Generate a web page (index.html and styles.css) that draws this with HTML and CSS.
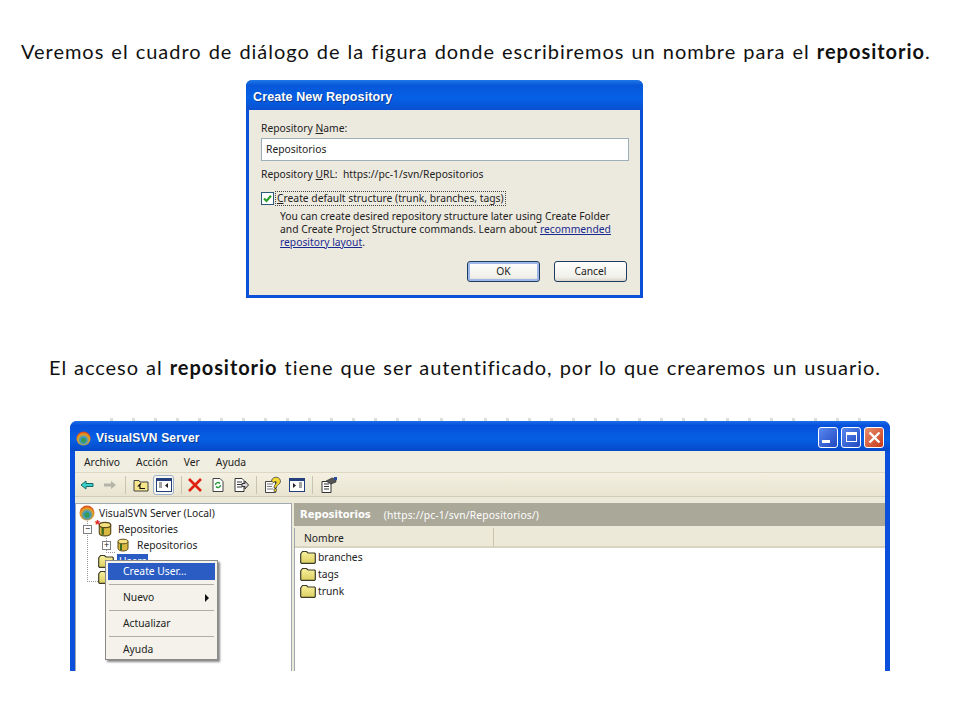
FILE: index.html
```html
<!DOCTYPE html>
<html lang="es">
<head>
<meta charset="utf-8">
<title>Repositorio</title>
<link rel="stylesheet" href="styles.css">
</head>
<body>
<svg class="defs" width="0" height="0">
  <defs>
    <linearGradient id="fold" x1="0" y1="0" x2="0" y2="1"><stop offset="0" stop-color="#f8f0a0"/><stop offset="1" stop-color="#dcd060"/></linearGradient>
    <radialGradient id="logo" cx=".5" cy=".62" r=".6"><stop offset="0" stop-color="#2f9a3c"/><stop offset=".35" stop-color="#2f9ad0"/><stop offset=".7" stop-color="#e8a020"/><stop offset="1" stop-color="#d8401e"/></radialGradient>
    <symbol id="folder" viewBox="0 0 16 14"><path d="M1 3.500 2.500 1.500h4L8 3h6.500l.8.8V12.500l-.8.8H1.500l-.8-.8V4z" fill="url(#fold)" stroke="#3c3c28" stroke-width="1.200"/></symbol>
    <symbol id="db" viewBox="0 0 14 14"><path d="M2 3.500v7c0 1.500 2.200 2.500 5 2.500s5-1 5-2.500v-7z" fill="#d8b840" stroke="#5a4a18"/><ellipse cx="7" cy="3.500" rx="5" ry="2.300" fill="#f4e080" stroke="#5a4a18"/><path d="M5 6v6" stroke="#3c6a20" stroke-width="2"/></symbol>
    <symbol id="applogo" viewBox="0 0 16 16"><circle cx="8" cy="8" r="7.500" fill="url(#logo)"/><circle cx="8" cy="10" r="2.500" fill="#3a9a50"/></symbol>
  </defs>
</svg>
<main class="slide">
  <p class="line line-one">Veremos el cuadro de diálogo de la figura donde escribiremos un nombre para el <b>repositorio</b>.</p>

  <section class="dialog">
    <header class="dialog-title">Create New Repository</header>
    <div class="dialog-body">
      <div class="field-label">Repository <u>N</u>ame:</div>
      <div class="text-input">Repositorios</div>
      <div class="url-row">Repository <u>U</u>RL:&nbsp; https://pc-1/svn/Repositorios</div>
      <div class="check-row">
        <span class="checkbox"><svg width="11" height="11" viewBox="0 0 11 11"><path d="M2 5.500 4.500 8 9 2.800" fill="none" stroke="#2aa02a" stroke-width="2.200"/></svg></span>
        <span class="check-label"><u>C</u>reate default structure (trunk, branches, tags)</span>
      </div>
      <p class="help">You can create desired repository structure later using Create Folder<br>and Create Project Structure commands. Learn about <a class="link">recommended<br>repository layout</a>.</p>
      <div class="buttons">
        <span class="btn btn-default">OK</span>
        <span class="btn">Cancel</span>
      </div>
    </div>
  </section>

  <p class="line line-two">El acceso al <b>repositorio</b> tiene que ser autentificado, por lo que crearemos un usuario.</p>

  <div class="behind"></div>
  <section class="window">
    <header class="win-title">
      <svg class="win-logo" width="15" height="15"><use href="#applogo"/></svg>
      <span class="win-name">VisualSVN Server</span>
      <span class="caps">
        <span class="cap"><i class="cap-min"></i></span>
        <span class="cap"><i class="cap-max"></i></span>
        <span class="cap cap-close"><svg width="13" height="13" viewBox="0 0 13 13"><path d="M1.500 1.500 11.500 11.500M11.500 1.500 1.500 11.500" stroke="#fff" stroke-width="2.400"/></svg></span>
      </span>
    </header>
    <div class="win-inner">
      <nav class="menubar"><span>Archivo</span><span>Acción</span><span>Ver</span><span>Ayuda</span></nav>
      <div class="toolbar">
        <svg class="tool" width="16" height="16" viewBox="0 0 16 16"><path d="M7 4 2 8l5 4v-2.500h7v-3H7z" fill="#38d0c8" stroke="#176a6a"/></svg>
        <svg class="tool" width="16" height="16" viewBox="0 0 16 16"><path d="M9 4l5 4-5 4V9.500H2v-3h7z" fill="#b4b4a8"/></svg>
        <i class="sep"></i>
        <svg class="tool" width="16" height="16" viewBox="0 0 16 16"><path d="M1 3.500h5l1 1.500h8v9H1z" fill="#f6e58a" stroke="#444"/><path d="M8 6.500 5.500 9H7v2.500h5" fill="none" stroke="#111" stroke-width="1.200"/></svg>
        <span class="tool-on"><svg width="16" height="14" viewBox="0 0 16 14"><rect x=".5" y=".5" width="15" height="13" fill="#fff" stroke="#23407c"/><rect x="1" y="1" width="14" height="2" fill="#23407c"/><path d="M3 5h3M3 7h3M3 9h3" stroke="#444"/><path d="M12 5v5L9 7.500z" fill="#222"/></svg></span>
        <i class="sep"></i>
        <svg class="tool tool-x" width="16" height="16" viewBox="0 0 16 16"><path d="M2 2 14 14M14 2 2 14" stroke="#e02010" stroke-width="2.600"/></svg>
        <svg class="tool" width="16" height="16" viewBox="0 0 16 16"><path d="M3 1.500h7l3 3v10H3z" fill="#fff" stroke="#444"/><path d="M5.500 8a2.500 2.500 0 0 1 4.500-1.500M10.500 8a2.500 2.500 0 0 1-4.500 1.500" fill="none" stroke="#2a9a3a" stroke-width="1.300"/></svg>
        <svg class="tool" width="16" height="16" viewBox="0 0 16 16"><path d="M2 1.500h7l2 2v11H2z" fill="#fff" stroke="#333"/><path d="M4 5h5M4 7.500h5M4 10h5" stroke="#333"/><path d="M9 6.500h3V4l3.500 4-3.500 4V9.500H9z" fill="#dcdcdc" stroke="#333"/></svg>
        <i class="sep"></i>
        <svg class="tool" width="18" height="18" viewBox="0 0 18 18"><path d="M1.500 5.500h10v11h-10z" fill="#fff" stroke="#444"/><path d="M3 8h6M3 10.500h5M3 13h6" stroke="#777"/><path d="M7.500 5a4.500 4 0 1 1 7 3.500c-1.500 1-2 1.500-2 3.500h-2.500c0-3 1-3.500 2.200-4.500.9-.8.400-2-.7-2s-1.500.6-1.500 1.500z" fill="#f5d830" stroke="#333" stroke-width=".7"/><rect x="10" y="13" width="2.500" height="2.500" fill="#f5d830" stroke="#333" stroke-width=".6"/></svg>
        <svg class="tool" width="16" height="14" viewBox="0 0 16 14"><rect x=".5" y=".5" width="15" height="13" fill="#fff" stroke="#23407c"/><rect x="1" y="1" width="14" height="2" fill="#23407c"/><path d="M10 5h3M10 7h3M10 9h3" stroke="#444"/><path d="M4 5v5l3-2.500z" fill="#222"/></svg>
        <i class="sep"></i>
        <svg class="tool" width="18" height="18" viewBox="0 0 18 18"><path d="M2 5.500h9v11H2z" fill="#fff" stroke="#333"/><path d="M4 8h5M4 10.500h5M4 13h5" stroke="#333"/><path d="M6 5 12 2l4 1v3l-5 2-2-1z" fill="#555" stroke="#222" stroke-width=".6"/><rect x="14" y="1" width="3" height="3" fill="#2a4aa0"/></svg>
      </div>
      <div class="panes">
        <div class="tree">
          <div class="guide guide-root"></div>
          <div class="guide guide-branch"></div>
          <div class="node node-root"><svg width="16" height="16"><use href="#applogo"/></svg><span>VisualSVN Server (Local)</span></div>
          <div class="node node-l1"><i class="box">−</i><span class="stack"><svg width="16" height="16"><use href="#db"/></svg><em>*</em></span><span>Repositories</span></div>
          <div class="node node-l2"><i class="box">+</i><svg width="14" height="14"><use href="#db"/></svg><span>Repositorios</span></div>
          <div class="node node-l1b"><svg width="16" height="14"><use href="#folder"/></svg><span class="picked">Users</span></div>
          <div class="node node-l1b"><svg width="16" height="14"><use href="#folder"/></svg></div>
          <div class="menu">
            <div class="menu-item menu-active">Create User...</div>
            <hr>
            <div class="menu-item menu-sub">Nuevo<i class="arrow"></i></div>
            <hr>
            <div class="menu-item">Actualizar</div>
            <hr>
            <div class="menu-item">Ayuda</div>
          </div>
        </div>
        <div class="detail">
          <div class="detail-head"><b>Repositorios</b><span>(https://pc-1/svn/Repositorios/)</span></div>
          <div class="list">
            <div class="columns"><span class="col-name">Nombre</span><span class="col-rest"></span></div>
            <div class="row"><svg width="16" height="14"><use href="#folder"/></svg>branches</div>
            <div class="row"><svg width="16" height="14"><use href="#folder"/></svg>tags</div>
            <div class="row"><svg width="16" height="14"><use href="#folder"/></svg>trunk</div>
          </div>
        </div>
      </div>
    </div>
  </section>
</main>
</body>
</html>
```
FILE: styles.css
```css
html, body { margin: 0; padding: 0; background: #fff; }
body { height: 720px; overflow: hidden; }
.defs { position: absolute; }
.slide { width: 960px; height: 720px; padding-top: 37px; box-sizing: border-box; font-family: "Lato", "Liberation Sans", sans-serif; color: #111; }
.line { margin: 0; height: 28px; line-height: 28px; font-size: 20px; white-space: nowrap; word-spacing: 1px; }
.line-one { margin-left: 21px; letter-spacing: .97px; }
.line-two { margin-left: 49px; margin-top: 55px; letter-spacing: .94px; }

.dialog { width: 397px; height: 218px; margin: 15px 0 0 246px; box-sizing: border-box; border: 3px solid #0a50d8; border-top: 0; border-radius: 6px 6px 0 0; background: #ece9df; font-family: "Noto Sans", "Liberation Sans", sans-serif; font-size: 10.300px; color: #222; display: flex; flex-direction: column; }
.dialog-title { height: 30px; margin: 0 -3px; padding: 0 0 0 7px; line-height: 35px; background: linear-gradient(#1e78e8 0, #0757d8 18%, #0560e6 60%, #0a50d0 100%); border-radius: 6px 6px 0 0; color: #fff; font-family: "Liberation Sans", sans-serif; font-size: 12.500px; font-weight: 700; letter-spacing: .12px; box-sizing: border-box; text-shadow: 1px 1px 0 #0a3a90; }
.dialog-body { flex: 1; padding: 11px 11px 0 12px; display: flex; flex-direction: column; }
.field-label { line-height: 14px; }
.text-input { height: 23px; line-height: 21px; margin-top: 3px; padding-left: 4px; box-sizing: border-box; background: #fff; border: 1px solid #9db0ba; }
.url-row { margin-top: 6px; line-height: 14px; }
.check-row { display: flex; align-items: center; margin-top: 10px; height: 14px; }
.checkbox { width: 13px; height: 13px; box-sizing: border-box; border: 1px solid #2c5a78; background: #fff; display: flex; align-items: center; justify-content: center; }
.check-label { margin-left: 2px; padding: 0 1px; outline: 1px dotted #444; line-height: 13px; }
.help { margin: 5px 0 0 19px; line-height: 13px; }
.link { color: #1a2a90; text-decoration: underline; }
.buttons { display: flex; justify-content: flex-end; gap: 14px; margin-top: 12px; padding-right: 2px; }
.btn { width: 73px; height: 21px; box-sizing: border-box; border: 1px solid #1c3c60; border-radius: 3px; background: linear-gradient(#fff, #f0efe8 80%, #d8d4c8); text-align: center; line-height: 19px; }
.btn-default { box-shadow: inset 0 0 0 2px #9db8e8; }

.behind { height: 3px; margin: 37px 0 0 110px; width: 760px; background: repeating-linear-gradient(90deg, #cfcfc8 0 3px, #fff 3px 22px); opacity: .7; }
.window { width: 820px; height: 250px; margin-left: 70px; box-sizing: border-box; padding: 0 5px; overflow: hidden; border-radius: 7px 7px 0 0; background: #0a50dc; font-family: "Noto Sans", "Liberation Sans", sans-serif; font-size: 10.300px; color: #222; display: flex; flex-direction: column; }
.win-title { flex: none; height: 30px; margin: 0 -5px; padding: 4px 6px 0 6px; box-sizing: border-box; display: flex; align-items: center; background: linear-gradient(#1a70e8 0, #0650dc 15%, #0560e4 60%, #0648c8 100%); color: #fff; font-family: "Liberation Sans", sans-serif; font-size: 12px; font-weight: 700; letter-spacing: .2px; text-shadow: 1px 1px 0 #0a3a90; }
.win-logo { margin-right: 5px; }
.win-name { flex: 1; }
.caps { display: flex; gap: 3px; margin-top: -2px; }
.cap { width: 20px; height: 21px; box-sizing: border-box; border: 1px solid #fff; border-radius: 3px; background: linear-gradient(135deg, #5a88f0, #2048c0); display: flex; align-items: center; justify-content: center; position: relative; }
.cap-close { background: linear-gradient(135deg, #e89070, #c83818); }
.cap-min { width: 8px; height: 3px; background: #fff; margin: 8px 5px 0 0; }
.cap-max { width: 11px; height: 10px; box-sizing: border-box; border: 1px solid #fff; border-top-width: 3px; }
.win-inner { flex: 1; min-height: 0; background: #ece9d8; display: flex; flex-direction: column; }
.menubar { flex: none; height: 22px; display: flex; align-items: center; gap: 16px; padding-left: 9px; background: #f0eee0; border-bottom: 1px solid #dcd8c4; box-sizing: border-box; }
.toolbar { flex: none; height: 24px; display: flex; align-items: center; gap: 7px; padding-left: 4px; background: linear-gradient(#f3f0e2, #e8e4d0); border-bottom: 1px solid #d0ccb8; box-sizing: border-box; }
.tool { flex: none; }
.tool-x { margin-left: -2px; }
.sep { width: 1px; height: 18px; background: #c8c4b0; flex: none; }
.tool-on { width: 21px; height: 20px; box-sizing: border-box; border: 1px solid #9db0c8; border-radius: 3px; background: #f8f8f2; display: flex; align-items: center; justify-content: center; margin-left: -3px; flex: none; }
.panes { flex: 1; min-height: 0; display: flex; gap: 2px; padding-top: 6px; }

.tree { width: 217px; flex: none; box-sizing: border-box; background: #fff; border: 1px solid #a0a8b0; border-bottom: 0; position: relative; padding-top: 1px; }
.guide { position: absolute; border-left: 1px dotted #999; border-bottom: 1px dotted #999; }
.guide-root { left: 11px; top: 17px; width: 10px; height: 60px; }
.guide-branch { left: 30px; top: 34px; width: 8px; height: 14px; }
.node { height: 16px; display: flex; align-items: center; white-space: nowrap; position: relative; }
.node svg { flex: none; }
.node-root svg { margin: 0 4px 0 3px; }
.node-l1 { padding-left: 7px; }
.node-l2 { padding-left: 26px; }
.node-l1b { padding-left: 22px; }
.node-l2 svg { margin: 0 7px 0 5px; }
.node-l1b svg { margin-right: 3px; }
.box { width: 9px; height: 9px; box-sizing: border-box; border: 1px solid #808080; background: #fff; font-style: normal; font-size: 9px; line-height: 6px; text-align: center; flex: none; }
.stack { position: relative; margin: 0 5px 0 5px; width: 16px; height: 16px; }
.stack em { position: absolute; left: -2px; top: -4px; color: #e02020; font: 700 13px "Liberation Sans", sans-serif; }
.picked { background: #2a5cc4; color: #fff; padding: 0 2px; }
.menu { position: absolute; left: 29px; top: 56px; width: 113px; height: 100px; box-sizing: border-box; padding: 2px; background: #f4f2ea; border: 1px solid #8a8a88; box-shadow: 2px 2px 2px #888; }
.menu-item { height: 17px; line-height: 17px; padding-left: 15px; position: relative; }
.menu-active { background: #2a5cc4; color: #fff; }
.menu hr { border: 0; border-top: 1px solid #b0aea4; margin: 4px 1px 4px; height: 0; }
.arrow { position: absolute; right: 6px; top: 5px; border-left: 4px solid #111; border-top: 4px solid transparent; border-bottom: 4px solid transparent; }

.detail { flex: 1; min-width: 0; display: flex; flex-direction: column; }
.detail-head { flex: none; height: 23px; background: #aaa899; color: #fff; display: flex; align-items: center; gap: 13px; padding-left: 6px; box-sizing: border-box; }
.detail-head b { font-family: "DejaVu Sans", sans-serif; font-size: 10px; }
.detail-head span { letter-spacing: .15px; }
.list { flex: 1; background: #fff; margin-top: 2px; border-left: 1px solid #a0a8b0; }
.columns { height: 20px; display: flex; background: #ece9d8; border-bottom: 2px solid #d8d4c0; box-sizing: border-box; }
.col-name { width: 199px; padding-left: 9px; line-height: 20px; box-sizing: border-box; border-right: 1px solid #c8c4b0; }
.row { height: 17px; display: flex; align-items: center; gap: 2px; padding-left: 5px; }
.row:first-of-type { margin-top: 1px; }
```
